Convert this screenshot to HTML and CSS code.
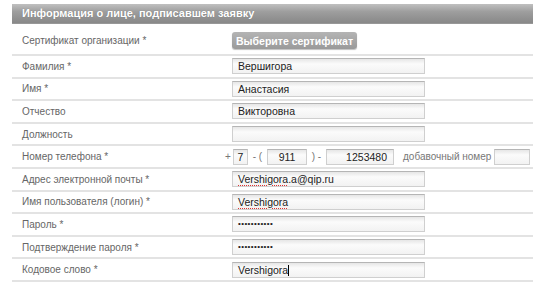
FILE: index.html
```html
<!DOCTYPE html>
<html lang="ru">
<head>
    <meta charset="UTF-8">
    <title>Информация о лице, подписавшем заявку</title>
    <link rel="stylesheet" href="styles.css">
</head>
<body>

    <div class="signer-form">
        <div class="form-head">Информация о лице, подписавшем заявку</div>

        <div class="form-row cert-row">
            <div class="row-label">Сертификат организации *</div>
            <div class="row-value"><button class="cert-btn">Выберите сертификат</button></div>
        </div>

        <div class="form-row">
            <div class="row-label">Фамилия *</div>
            <div class="row-value"><div class="field">Вершигора</div></div>
        </div>

        <div class="form-row">
            <div class="row-label">Имя *</div>
            <div class="row-value"><div class="field">Анастасия</div></div>
        </div>

        <div class="form-row">
            <div class="row-label">Отчество</div>
            <div class="row-value"><div class="field">Викторовна</div></div>
        </div>

        <div class="form-row">
            <div class="row-label">Должность</div>
            <div class="row-value"><div class="field"></div></div>
        </div>

        <!-- Phone: country code, area code, number, extension -->
        <div class="form-row">
            <div class="row-label">Номер телефона *</div>
            <div class="row-value phone">
                <span class="sep plus">+</span>
                <div class="field small code">7</div>
                <span class="sep">- (</span>
                <div class="field small area">911</div>
                <span class="sep">) -</span>
                <div class="field small number">1253480</div>
                <span class="ext-label">добавочный номер</span>
                <div class="field small ext"></div>
            </div>
        </div>

        <div class="form-row">
            <div class="row-label">Адрес электронной почты *</div>
            <div class="row-value"><div class="field"><span class="misspelled">Vershigora</span>.a@qip.ru</div></div>
        </div>

        <div class="form-row">
            <div class="row-label">Имя пользователя (логин) *</div>
            <div class="row-value"><div class="field"><span class="misspelled">Vershigora</span></div></div>
        </div>

        <div class="form-row">
            <div class="row-label">Пароль *</div>
            <div class="row-value"><div class="field dots">•••••••••••</div></div>
        </div>

        <div class="form-row">
            <div class="row-label">Подтверждение пароля *</div>
            <div class="row-value"><div class="field dots">•••••••••••</div></div>
        </div>

        <div class="form-row">
            <div class="row-label">Кодовое слово *</div>
            <div class="row-value"><div class="field">Vershigora<span class="caret"></span></div></div>
        </div>
    </div>

</body>
</html>
```

FILE: styles.css
```css
body {
    margin: 0;
    background: #fff;
    font-family: "Liberation Sans", Arial, sans-serif;
}

.signer-form {
    margin: 4px 0 0 12px;
}

/* Grey title bar */
.form-head {
    height: 19px;
    line-height: 19px;
    padding-left: 10px;
    background: linear-gradient(#c0c0c0, #9e9e9e 40%, #888);
    border-bottom: 1px solid #979797;
    color: #fff;
    font-size: 11px;
    font-weight: bold;
    text-shadow: 0 0 1px rgba(0, 0, 0, 0.25);
}

.form-row {
    display: grid;
    grid-template-columns: 220px 1fr;
    align-items: center;
    height: 22.6px;
    box-sizing: border-box;
    border-bottom: 2px solid #e3e3e3;
}

.form-row.cert-row {
    height: 32px;
    padding-top: 3px;
}

.row-label {
    padding-left: 10px;
    font-size: 10px;
    color: #666;
}

.row-value {
    display: flex;
    align-items: center;
}

.cert-btn {
    height: 17px;
    padding: 0 4px;
    border: none;
    border-radius: 3px;
    background: linear-gradient(#b4b4b4, #9a9a9a);
    box-shadow: 0 1px 1px rgba(0, 0, 0, 0.25);
    color: #fff;
    font-family: "Liberation Sans", Arial, sans-serif;
    font-size: 10.5px;
    font-weight: bold;
}

/* Text field look */
.field {
    flex-shrink: 0;
    width: 193px;
    height: 16px;
    box-sizing: border-box;
    padding-left: 5px;
    border: 1px solid #cfcfcf;
    border-top-color: #b5b5b5;
    background: linear-gradient(#e6e6e6, #fbfbfb 35%, #f2f2f2);
    font-size: 10.5px;
    line-height: 14px;
    color: #222;
}

.field.dots {
    font-size: 8px;
    letter-spacing: 0.4px;
}

.misspelled {
    text-decoration: underline dotted #e03030;
    text-underline-offset: 2px;
}

.caret {
    display: inline-block;
    width: 1px;
    height: 11px;
    background: #000;
    vertical-align: -2px;
}

/* Phone row */
.row-value.phone {
    margin-left: -7px;
    white-space: nowrap;
}

.sep {
    flex-shrink: 0;
    width: 19px;
    text-align: center;
    font-size: 10px;
    color: #777;
}

.sep.plus {
    width: 8px;
    text-align: left;
}

.field.small {
    text-align: center;
    padding: 0;
}

.field.code {
    width: 15px;
}

.field.area {
    width: 40px;
}

.field.number {
    width: 68px;
    text-align: right;
    padding-right: 6px;
}

.ext-label {
    font-size: 10px;
    color: #777;
    margin: 0 3px 0 9px;
}

.field.ext {
    width: 36px;
}
```
